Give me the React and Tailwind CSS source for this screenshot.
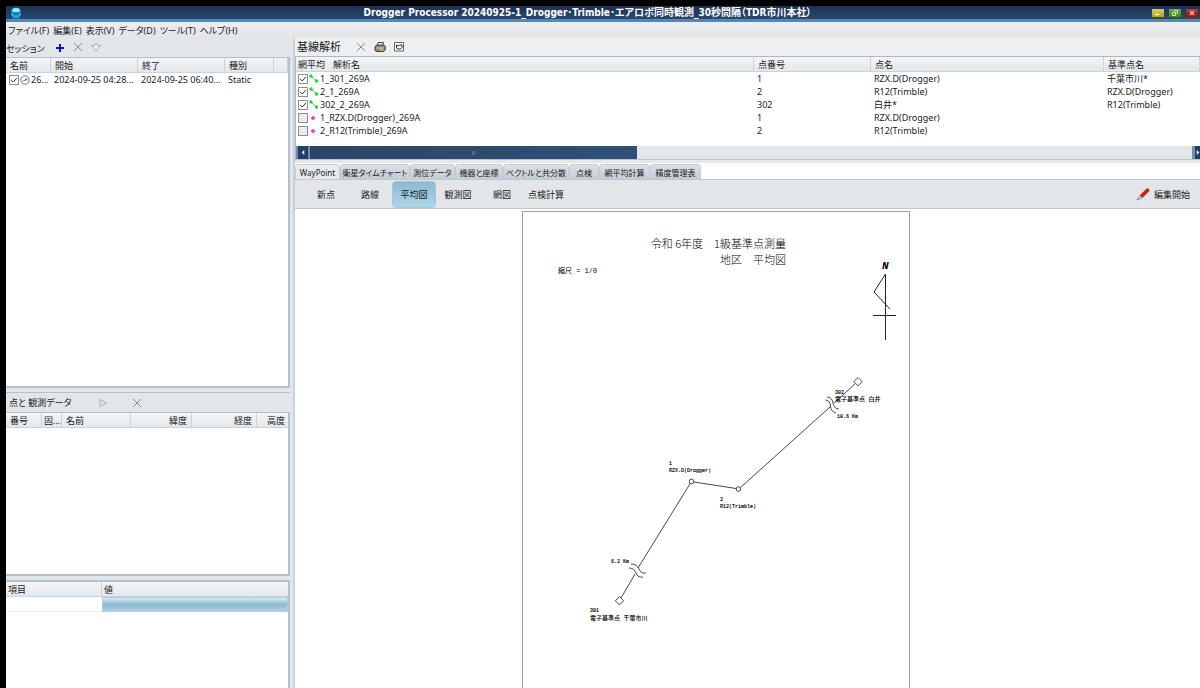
import { useState } from 'react';
import { clsx } from 'clsx';

const menus = ['ファイル(F)', '編集(E)', '表示(V)', 'データ(D)', 'ツール(T)', 'ヘルプ(H)'];

const baselines = [
    { name: '1_301_269A', vector: true, no: '1', point: 'RZX.D(Drogger)', base: '千葉市川*' },
    { name: '2_1_269A', vector: true, no: '2', point: 'R12(Trimble)', base: 'RZX.D(Drogger)' },
    { name: '302_2_269A', vector: true, no: '302', point: '白井*', base: 'R12(Trimble)' },
    { name: '1_RZX.D(Drogger)_269A', vector: false, no: '1', point: 'RZX.D(Drogger)', base: '' },
    { name: '2_R12(Trimble)_269A', vector: false, no: '2', point: 'R12(Trimble)', base: '' },
];

const tabs = [
    { label: 'WayPoint', width: 'w-[45px]' },
    { label: '衛星タイムチャート', width: 'w-[70px]' },
    { label: '測位データ', width: 'w-[45px]' },
    { label: '機器と座標', width: 'w-[48px]' },
    { label: 'ベクトルと共分散', width: 'w-[66px]' },
    { label: '点検', width: 'w-[30px]' },
    { label: '網平均計算', width: 'w-[51px]' },
    { label: '精度管理表', width: 'w-[51px]' },
];

const views = ['新点', '路線', '平均図', '観測図', '網図', '点検計算'];

const headRow = 'h-[15px] bg-linear-to-b from-[#f4f5f6] to-[#e3e7ea] text-left';
const headCell = 'border-r border-b border-[#c9d3dc] px-1 font-normal whitespace-nowrap';

const CheckBox = ({ label, defaultChecked }) => (
    <span className="grid size-[10px] shrink-0">
        <input
            type="checkbox"
            aria-label={label}
            defaultChecked={defaultChecked}
            className="peer [grid-area:1/1] size-[10px] appearance-none border border-[#8e8f8f] bg-[#ececec] checked:bg-white"
        />
        <svg viewBox="0 0 10 10" className="pointer-events-none invisible [grid-area:1/1] size-[10px] peer-checked:visible">
            <path d="M2 4.8 4.2 7 8 2.8" fill="none" stroke="#333" strokeWidth="1" />
        </svg>
    </span>
);

const CrossIcon = () => (
    <svg viewBox="0 0 10 10" className="size-[10px]">
        <path d="M1 1 9 9M9 1 1 9" stroke="#8c8c8c" strokeWidth="1" fill="none" />
    </svg>
);

const IconButton = ({ label, children }) => (
    <button type="button" aria-label={label} className="flex size-3 items-center justify-center">
        {children}
    </button>
);

const TitleBar = () => (
    <header className="flex h-4 shrink-0 items-center border-b-3 border-[#5288b6] bg-linear-to-b from-[#1b3154] to-[#294a70] pr-[2px]">
        <svg viewBox="0 0 14 14" className="ml-[3px] size-[14px]">
            <circle cx="7" cy="7" r="6.5" fill="#153a8f" />
            <circle cx="7" cy="6.6" r="5" fill="#1e8fc4" />
            <ellipse cx="7" cy="4.3" rx="3.8" ry="2.2" fill="#9fe6ee" />
            <path d="M2 7.5h10c0 2.6-2.2 4.2-5 4.2S2 10 2 7.5z" fill="#24b6d6" />
            <path d="M4 7.3h6M5 9h4" stroke="#0e4a85" strokeWidth=".8" />
            <path d="M3 12q4 2.5 8 0" stroke="#4d9ad0" strokeWidth=".8" fill="none" />
        </svg>
        <h1 className="flex-1 text-center font-['DejaVu_Sans_Condensed','Noto_Sans','Noto_Sans_CJK_JP',sans-serif] text-[10px] leading-[13px] font-bold whitespace-nowrap text-white">
            Drogger Processor 20240925-1_Drogger･Trimble･エアロボ同時観測_30秒間隔（TDR市川本社）
        </h1>
        <div className="flex gap-[5px]">
            <button type="button" aria-label="最小化" className="h-2 w-3 bg-linear-to-b from-[#d9cf4a] to-[#b5a800]">
                <svg viewBox="0 0 12 8" className="h-2 w-3"><path d="M3 5.5h4" stroke="#fff" strokeWidth="1.2" /></svg>
            </button>
            <button type="button" aria-label="元に戻す" className="h-2 w-3 bg-linear-to-b from-[#6ea63c] to-[#3f8a05]">
                <svg viewBox="0 0 12 8" className="h-2 w-3"><path d="M5.5 2.5V1.500h3v3h-1M3.5 3.5h3v3h-3z" stroke="#dfeed2" fill="none" strokeWidth=".9" /></svg>
            </button>
            <button type="button" aria-label="閉じる" className="h-2 w-3 bg-linear-to-b from-[#b83a30] to-[#960d05]">
                <svg viewBox="0 0 12 8" className="h-2 w-3"><path d="M4 2l4 4M8 2 4 6" stroke="#f0c8c4" strokeWidth="1.1" /></svg>
            </button>
        </div>
    </header>
);

const MenuBar = () => (
    <nav className="flex h-4 shrink-0 items-center gap-1 bg-linear-to-b from-[#eceef0] to-[#e2e6e9] pl-[2px]">
        {menus.map((m) => (
            <button key={m} type="button" className="whitespace-nowrap">{m}</button>
        ))}
    </nav>
);

const SessionPanel = () => (
    <section className="flex min-h-0 flex-col">
        <div className="flex h-[19px] shrink-0 items-center">
            <h2 className="w-12 pt-[2px] whitespace-nowrap">セッション</h2>
            <div className="flex gap-[6px] pb-[2px]">
                <IconButton label="追加">
                    <svg viewBox="0 0 10 10" className="mt-[2px] size-[10px]"><path d="M5 1v8M1 5h8" stroke="#0a14d2" strokeWidth="2" /></svg>
                </IconButton>
                <IconButton label="削除"><CrossIcon /></IconButton>
                <IconButton label="取り込み">
                    <svg viewBox="0 0 10 10" className="size-[10px]">
                        <path d="M3.5 3.5 5 .8l1.5 2.700H9.500L5 9 .5 3.500z" fill="#f0f0f0" stroke="#a4a4a4" strokeWidth=".9" />
                    </svg>
                </IconButton>
            </div>
        </div>
        <div className="min-h-0 flex-1 overflow-hidden border-t border-r-2 border-b-2 border-[#b3c1ce] bg-white">
            <table className="w-full table-fixed border-separate border-spacing-0">
                <colgroup>
                    <col className="w-[45px]" />
                    <col className="w-[87px]" />
                    <col className="w-[87px]" />
                    <col className="w-[49px]" />
                    <col />
                </colgroup>
                <thead>
                    <tr className={headRow}>
                        <th className={headCell}>名前</th>
                        <th className={headCell}>開始</th>
                        <th className={headCell}>終了</th>
                        <th className={headCell}>種別</th>
                        <th className={headCell} aria-label="その他" />
                    </tr>
                </thead>
                <tbody>
                    <tr className="h-[13px] whitespace-nowrap">
                        <td className="pl-[3px]">
                            <div className="flex items-center gap-px">
                                <CheckBox label="269A" defaultChecked />
                                <svg viewBox="0 0 10 10" className="size-[10px] shrink-0">
                                    <circle cx="5" cy="5" r="4.2" fill="none" stroke="#555" strokeWidth=".8" />
                                    <path d="M2.5 6.3 5 5.2 8 4.6M5 5.2 6.5 3" fill="none" stroke="#555" strokeWidth=".8" />
                                </svg>
                                26...
                            </div>
                        </td>
                        <td className="pl-[3px]">2024-09-25 04:28...</td>
                        <td className="pl-[3px]">2024-09-25 06:40...</td>
                        <td className="pl-[3px]">Static</td>
                        <td />
                    </tr>
                </tbody>
            </table>
        </div>
    </section>
);

const PointPanel = () => (
    <section className="flex min-h-0 flex-col border-t border-[#b3c1ce]">
        <div className="flex h-[19px] shrink-0 items-center pl-[3px]">
            <h2 className="w-[88px] whitespace-nowrap">点と 観測データ</h2>
            <div className="flex gap-[22px]">
                <IconButton label="再生">
                    <svg viewBox="0 0 10 10" className="size-[10px]"><path d="M2 1.5 8.5 5 2 8.5z" fill="none" stroke="#a8a8a8" strokeWidth=".9" /></svg>
                </IconButton>
                <IconButton label="点を削除"><CrossIcon /></IconButton>
            </div>
        </div>
        <div className="min-h-0 flex-1 overflow-hidden border-t border-r-2 border-b-2 border-[#b3c1ce] bg-white">
            <table className="w-full table-fixed border-separate border-spacing-0">
                <colgroup>
                    <col className="w-9" />
                    <col className="w-5" />
                    <col />
                    <col className="w-[61px]" />
                    <col className="w-[65px]" />
                    <col className="w-[31px]" />
                </colgroup>
                <thead>
                    <tr className={headRow}>
                        <th className={headCell}>番号</th>
                        <th className="border-r border-b border-[#c9d3dc] pl-[2px] font-normal whitespace-nowrap">固...</th>
                        <th className={headCell}>名前</th>
                        <th className={clsx(headCell, 'text-right')}>緯度</th>
                        <th className={clsx(headCell, 'text-right')}>経度</th>
                        <th className="border-b border-[#c9d3dc] pr-[3px] text-right font-normal whitespace-nowrap">高度</th>
                    </tr>
                </thead>
            </table>
        </div>
    </section>
);

const PropertyPanel = () => (
    <section className="min-h-0 overflow-hidden border-t-2 border-r-2 border-[#b3c1ce] bg-white">
        <table className="w-full table-fixed border-separate border-spacing-0">
            <colgroup>
                <col className="w-24" />
                <col />
            </colgroup>
            <thead>
                <tr className={headRow}>
                    <th className="border-r border-b border-[#c9d3dc] pl-[2px] font-normal">項目</th>
                    <th className="border-b border-[#c9d3dc] pl-[2px] font-normal">値</th>
                </tr>
            </thead>
            <tbody>
                <tr className="h-[15px]">
                    <td className="border-b border-[#edf0f2]" />
                    <td className="border border-[#a9cde0] bg-linear-to-b from-[#d3edf6] via-[#90b8d2] to-[#acd0e2]" />
                </tr>
            </tbody>
        </table>
    </section>
);

const RowIcon = ({ vector }) => (
    <svg viewBox="0 0 10 10" className="mx-px size-[10px] shrink-0">
        {vector ? (
            <>
                <path d="M2 2 8 7.5" stroke="#777" strokeWidth=".8" />
                <path d="M2 .3v3.4M.3 2h3.4M7.5 5.3v3.4M5.8 7h3.4" stroke="#00e01c" strokeWidth="1.5" />
            </>
        ) : (
            <path d="M4 3v4M2 5h4" stroke="#ff1cf0" strokeWidth="1.5" />
        )}
    </svg>
);

const BaselinePanel = () => (
    <section className="shrink-0 bg-[#efefef]">
        <div className="flex h-[18px] items-center pl-[2px]">
            <h2 className="w-[58px] text-[11px] leading-4 whitespace-nowrap">基線解析</h2>
            <div className="flex gap-[7px]">
                <IconButton label="解析を削除"><CrossIcon /></IconButton>
                <IconButton label="印刷">
                    <svg viewBox="0 0 12 12" className="size-3">
                        <path d="M4 1.5h5.5L8.5 5H3z" fill="#eee" stroke="#333" strokeWidth=".9" />
                        <path d="M1 5.5 3 4h7l1.3 1.5V9L9.5 10.5H2L1 9z" fill="#888" stroke="#333" strokeWidth=".9" />
                        <path d="M2.5 7h7" stroke="#ddd" />
                        <path d="M6 9h3" stroke="#e0d020" strokeWidth="1.5" />
                    </svg>
                </IconButton>
                <IconButton label="チェック">
                    <svg viewBox="0 0 12 12" className="size-3">
                        <path d="M1.5 1.5h9v8.5h-9z" fill="#fff" stroke="#555" strokeWidth=".9" />
                        <path d="M3.5 4 5 5l1.500-1H9v2.500L7.500 8h-3L3.500 6.500z" fill="none" stroke="#222" strokeWidth="1" />
                    </svg>
                </IconButton>
            </div>
        </div>
        <div className="h-[90px] overflow-hidden border-t border-l border-[#a9b9c9] bg-white">
            <table className="w-full table-fixed border-separate border-spacing-0">
                <colgroup>
                    <col />
                    <col className="w-[117px]" />
                    <col className="w-[233px]" />
                    <col className="w-24" />
                </colgroup>
                <thead>
                    <tr className={headRow}>
                        <th className="border-r border-b border-[#c9d3dc] px-[2px] font-normal whitespace-nowrap"><span className="mr-2">網平均</span>解析名</th>
                        <th className={headCell}>点番号</th>
                        <th className={headCell}>点名</th>
                        <th className={headCell}>基準点名</th>
                    </tr>
                </thead>
                <tbody>
                    {baselines.map((b) => (
                        <tr key={b.name} className="h-[13px] whitespace-nowrap">
                            <td className="pl-[2px]">
                                <div className="flex items-center">
                                    <CheckBox label={b.name} defaultChecked={b.vector} />
                                    <RowIcon vector={b.vector} />
                                    {b.name}
                                </div>
                            </td>
                            <td className="pl-[3px]">{b.no}</td>
                            <td className="pl-[3px]">{b.point}</td>
                            <td className="pl-[3px]">{b.base}</td>
                        </tr>
                    ))}
                </tbody>
            </table>
        </div>
        <div className="flex h-[13px] border-l border-[#a9b9c9] bg-[#e2e6e9]">
            <button type="button" aria-label="左へ" className="flex w-[14px] items-center justify-center border-x-2 border-[#6d8cab] bg-[#213f66]">
                <svg viewBox="0 0 4 6" className="h-[5px] w-1"><path d="M3.5 0v6L.5 3z" fill="#fff" /></svg>
            </button>
            <div className="flex w-[327px] items-center justify-center bg-linear-to-r from-[#2c4565] to-[#2f5077]">
                <span className="h-1 w-[3px] border-x border-[#5d7b9a]" />
            </div>
            <button type="button" aria-label="右へ" className="ml-auto flex w-2 items-center justify-end border-l-3 border-[#7b8ea5] bg-[#213f66]">
                <svg viewBox="0 0 4 6" className="h-[5px] w-1"><path d="M.5 0v6l3-3z" fill="#fff" /></svg>
            </button>
        </div>
        <div className="h-1 border-t border-[#b9c5d0] bg-[#e4e8eb]" />
    </section>
);

// Network sheet: stations, baselines and the broken-line marks on long vectors
const NetworkSheet = () => (
    <svg
        viewBox="1 1 386 547"
        className="w-[388px] shrink-0 self-start border border-[#a0a0a0] bg-white font-['Liberation_Mono','Noto_Sans_CJK_JP',monospace] [font-feature-settings:normal]"
        fill="#000"
    >
        <g fontSize="11" className="font-['Noto_Sans_CJK_JP',sans-serif]" textAnchor="end" fontWeight="300">
            <text x="264" y="37">令和 6年度　1級基準点測量</text>
            <text x="264" y="53">地区　平均図</text>
        </g>
        <text x="36" y="62" fontSize="7">縮尺 = 1/0</text>

        <text x="360" y="58" fontSize="11" fontWeight="bold" fontStyle="italic">N</text>
        <path d="M363.5 63v66M363.5 63 352 81l16 17M351 104.5h23" fill="none" stroke="#222" strokeWidth="1" />

        <g fill="none" stroke="#333" strokeWidth=".9">
            <path d="M99 387 113 363M116 357 168.500 272" />
            <circle cx="169.5" cy="270.5" r="2.3" />
            <path d="M172 271 214 277.500" />
            <circle cx="216.5" cy="278" r="2.3" />
            <path d="M218.500 276.500 308 196M312 192 333 173" />
            <path d="m336 166.500 4.200 4.200-4.200 4.200-4.200-4.200z" />
            <path d="m97.500 385.500 4.200 4.200-4.200 4.200-4.200-4.200z" />
            <path d="M109 353q6 0 8 5t7 4M107 357q5 0 7 5t7 4" />
            <path d="M305 186q5 0 6 6t6 6M303.500 189q5 1 5 6t5.500 7" />
        </g>

        <g fontSize="5" stroke="#000" strokeWidth=".15">
            <text x="147" y="254">1</text>
            <text x="147" y="261">RZX.D(Drogger)</text>
            <text x="198" y="290">2</text>
            <text x="198" y="297">R12(Trimble)</text>
            <text x="89" y="352">6.2 Km</text>
            <text x="315" y="207">10.6 Km</text>
            <text x="313" y="183">302</text>
            <text x="68" y="401">301</text>
        </g>
        <g fontSize="6" fontWeight="500">
            <text x="313" y="190">電子基準点 白井</text>
            <text x="68" y="409">電子基準点 千葉市川</text>
        </g>
    </svg>
);

const WorkArea = () => {
    const [tab, setTab] = useState('WayPoint');
    const [view, setView] = useState('平均図');

    return (
        <section className="flex min-h-0 flex-1 flex-col bg-white">
            <div className="flex h-4 shrink-0 items-end" role="tablist">
                {tabs.map((t) => (
                    <button
                        key={t.label}
                        type="button"
                        role="tab"
                        aria-selected={tab === t.label}
                        onClick={() => setTab(t.label)}
                        className={clsx(
                            'flex h-[15px] shrink-0 items-center justify-center rounded-t-sm border-x border-t border-[#c3cdd6] text-[8px] whitespace-nowrap',
                            t.width,
                            tab === t.label ? 'bg-[#e8ebee]' : 'bg-linear-to-b from-[#dde1e5] to-[#c4ccd4]'
                        )}
                    >
                        {t.label}
                    </button>
                ))}
            </div>
            <div className="flex h-[30px] shrink-0 items-center border-t border-b border-[#bcc8d3] bg-[#e2e6e9] pr-[10px] pl-[9px]">
                {views.map((v) => (
                    <button
                        key={v}
                        type="button"
                        onClick={() => setView(v)}
                        className={clsx(
                            'h-[27px] w-11 shrink-0 rounded-sm border whitespace-nowrap',
                            view === v
                                ? 'border-[#a5c7da] bg-linear-to-b from-[#8db8d2] to-[#add6e8]'
                                : 'border-transparent'
                        )}
                    >
                        {v}
                    </button>
                ))}
                <button type="button" className="ml-auto flex items-center gap-1 whitespace-nowrap">
                    <svg viewBox="0 0 14 14" className="size-[14px]">
                        <path d="M4 8.5 10.5 2q1-.8 2 0t.3 2L6.5 10.5z" fill="#e8110c" stroke="#a00" strokeWidth=".5" />
                        <path d="M4 8.5 6.5 10.5 1 13z" fill="#d8d8d8" stroke="#555" strokeWidth=".6" />
                    </svg>
                    編集開始
                </button>
            </div>
            <div className="flex min-h-0 flex-1 justify-center overflow-hidden pt-[2px] pr-16">
                <NetworkSheet />
            </div>
        </section>
    );
};

const App = () => (
    <div className="flex h-screen flex-col overflow-hidden bg-black pt-[6px] pl-[6px] font-['Noto_Sans','Noto_Sans_CJK_JP',sans-serif] text-[9px] leading-[13px] text-[#1a1a1a] [font-feature-settings:'palt']">
        <TitleBar />
        <div className="flex min-h-0 flex-1 flex-col bg-[#e2e6e9]">
            <MenuBar />
            <main className="flex min-h-0 flex-1">
                <div className="grid w-[284px] shrink-0 grid-rows-[350fr_184fr_108fr] gap-1">
                    <SessionPanel />
                    <PointPanel />
                    <PropertyPanel />
                </div>
                <div className="w-[5px] shrink-0 border-r-2 border-[#c8d2db] bg-[#e2e6e9]" />
                <div className="flex min-w-0 flex-1 flex-col">
                    <BaselinePanel />
                    <WorkArea />
                </div>
            </main>
        </div>
    </div>
);

export default App;
